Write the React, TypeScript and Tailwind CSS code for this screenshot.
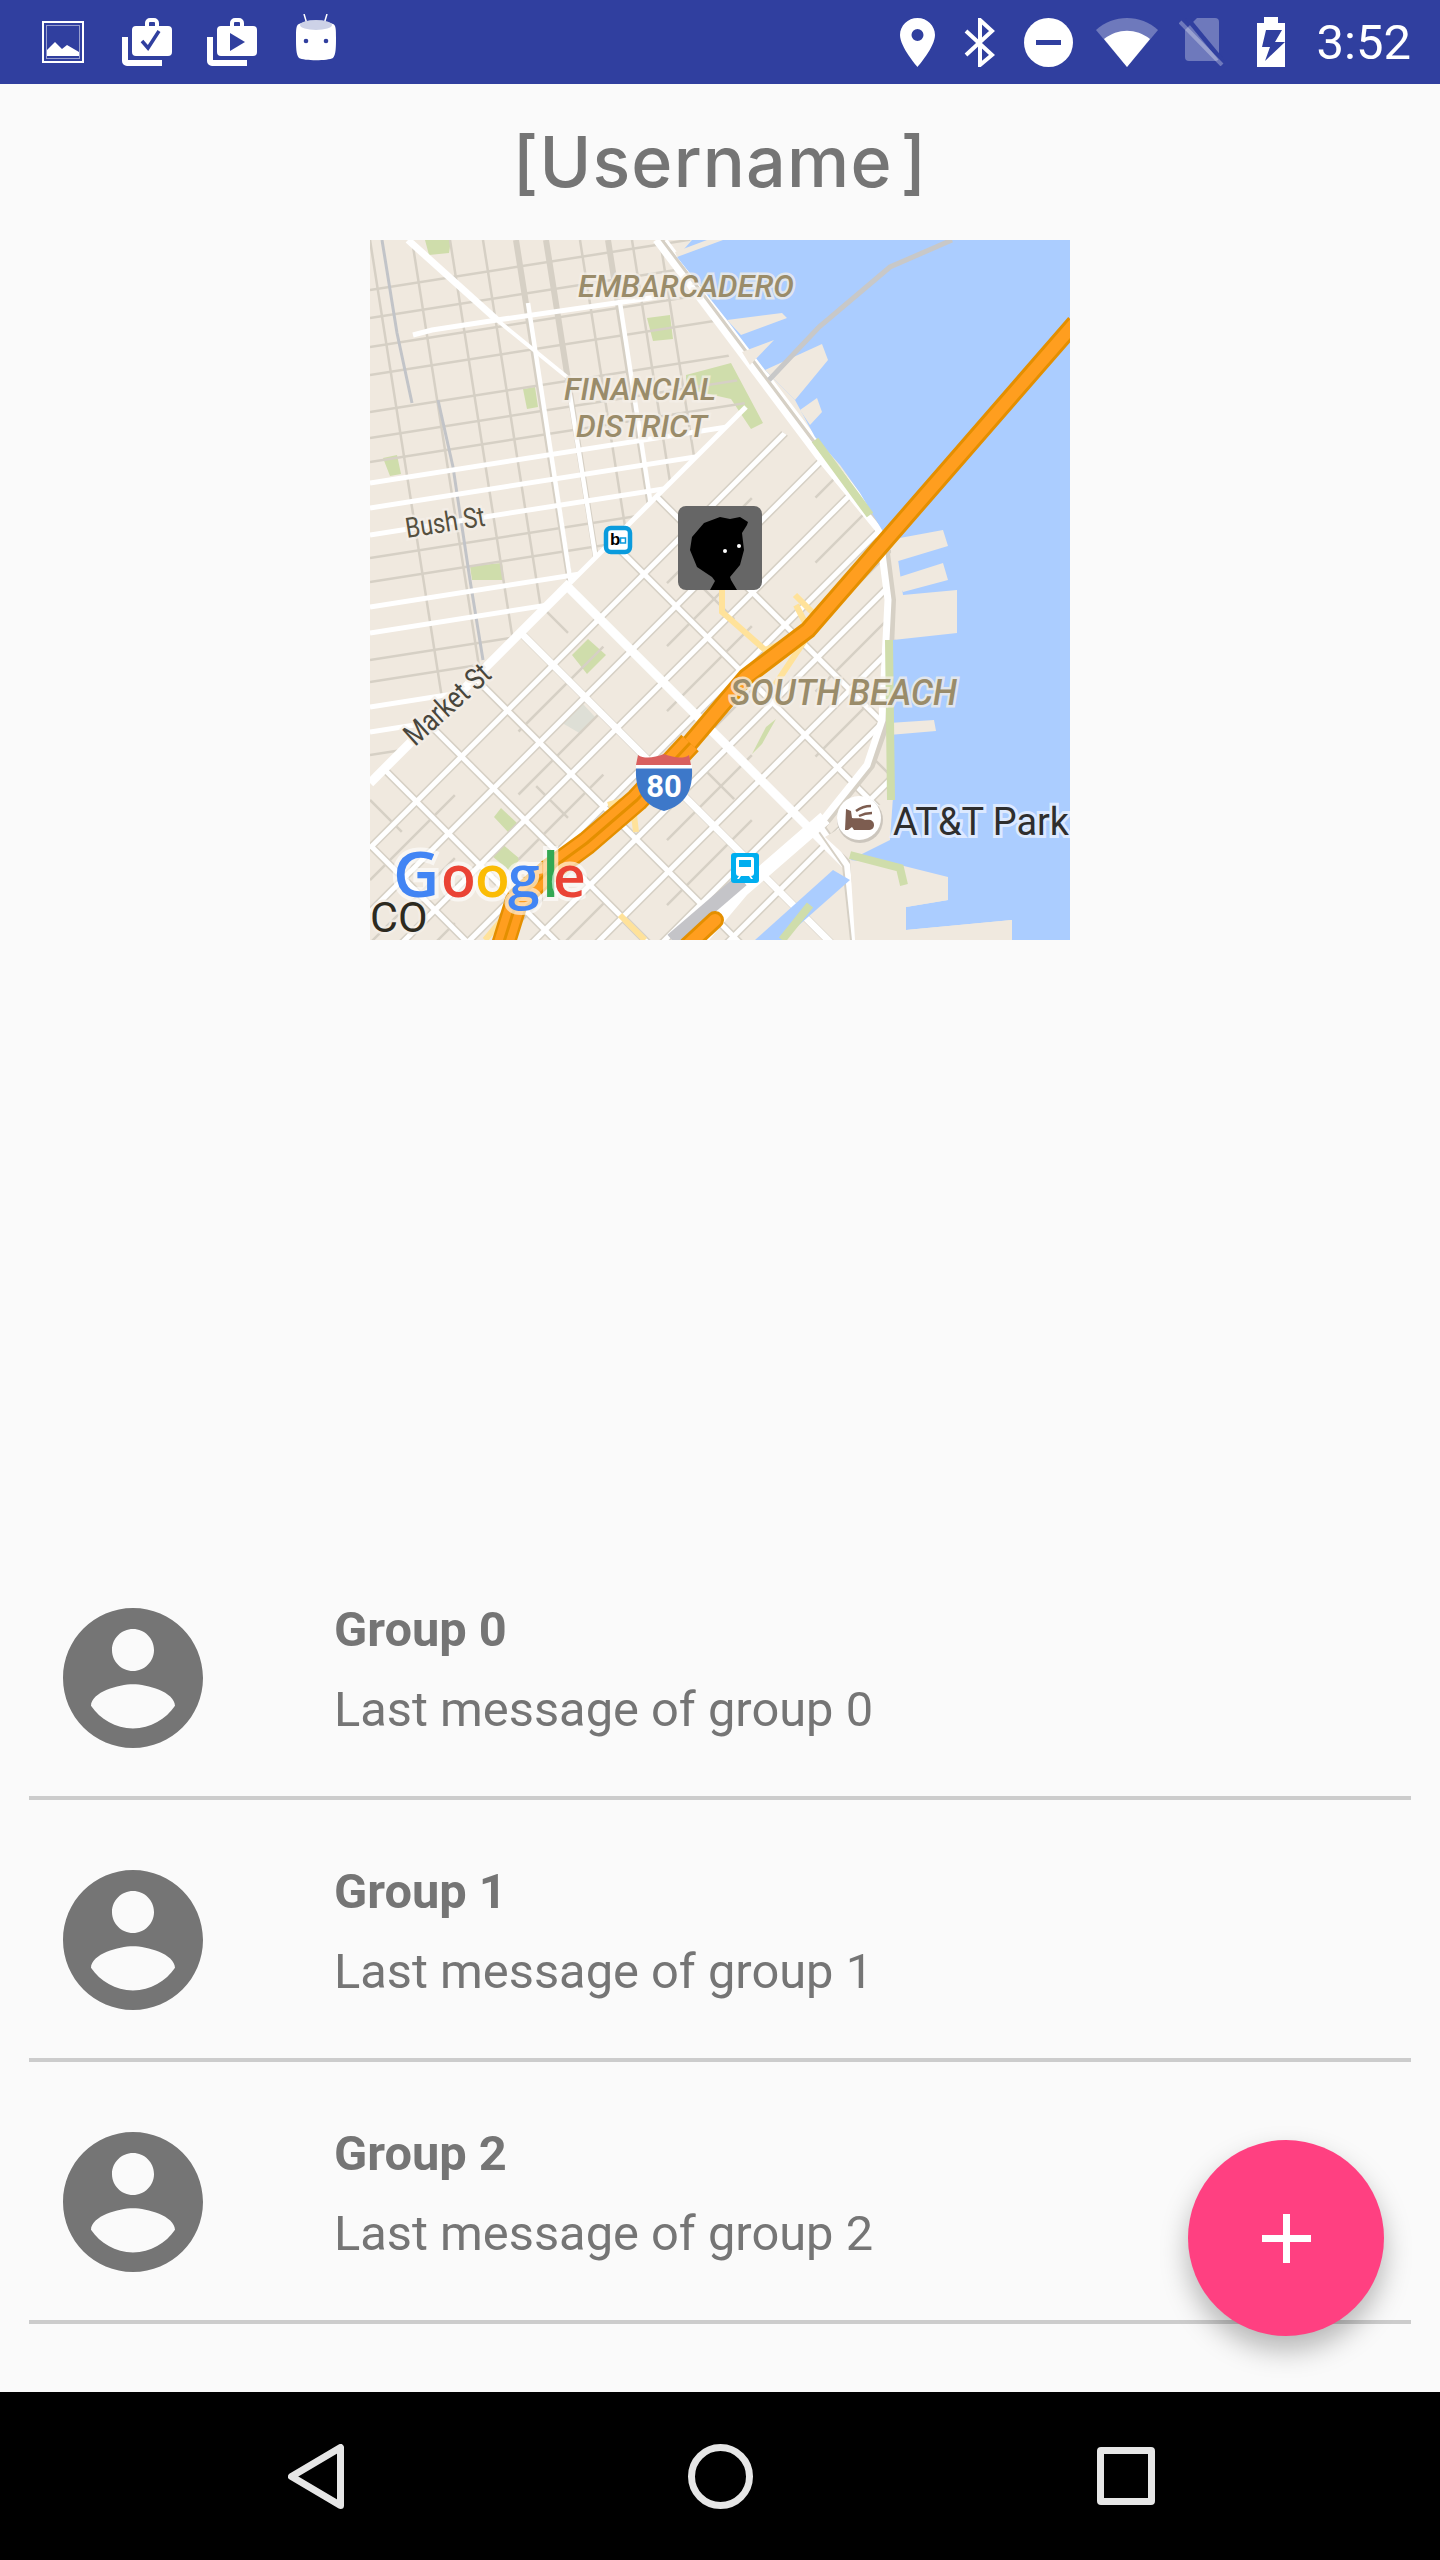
const fiMinor = [50, 78, 107, 135, 172, 198, 222, 318, 342, 420, 442, 515];
const fiMajor = [243, 268, 295, 367, 393, 467, 492];
const fiVert = [0, 42, 80, 113, 210, 262, 290];
const fiVertMajor = [146, 176, 238];
const somaA = [608, 672, 735, 800, 865, 930, 995, 1060];
const somaAlley = [640, 703, 768, 832, 897, 962];
const somaB = [-30, 60, 149, 242, 333, 425, 515, 605];
const somaBAlley = [15, 195, 380, 560];
const highway = 'M705 83L438 390 376 437 320 503 267 560 217 603 180 630 147 660 133 705';
const highwayLower = 'M320 503L267 560 217 603 180 630 147 660 133 705';

function GroupAvatar() {
  return (
    <svg viewBox="0 0 24 24" className="h-[168px] w-[168px] shrink-0 fill-[#757575]">
      <path d="M12 2C6.48 2 2 6.48 2 12s4.48 10 10 10 10-4.48 10-10S17.52 2 12 2zm0 3c1.66 0 3 1.34 3 3s-1.34 3-3 3-3-1.34-3-3 1.34-3 3-3zm0 14.2c-2.5 0-4.71-1.28-6-3.22.03-1.99 4-3.08 6-3.08 1.99 0 5.97 1.09 6 3.08-1.29 1.94-3.5 3.22-6 3.22z" />
    </svg>
  );
}

function BagIcon({ play }: { play?: boolean }) {
  return (
    <svg viewBox="0 0 50 48" className="h-[48px] w-[50px]">
      <path fill="none" stroke="#fff" strokeWidth="6" d="M3 19v24a2 2 0 0 0 2 2h35" />
      <path
        fill="#fff"
        fillRule="evenodd"
        d="M14 8h9v-3a5 5 0 0 1 5-5h4a5 5 0 0 1 5 5v3h9a4 4 0 0 1 4 4v22a4 4 0 0 1-4 4H14a4 4 0 0 1-4-4V12a4 4 0 0 1 4-4zM27 8h6V5a1 1 0 0 0-1-1h-4a1 1 0 0 0-1 1z"
      />
      {play ? (
        <path fill="#303F9F" d="M23 15l15 9-15 9z" />
      ) : (
        <path fill="none" stroke="#303F9F" strokeWidth="3.5" d="M20 23l6 7 11-17" />
      )}
    </svg>
  );
}

function StatusBar() {
  return (
    <div className="flex h-[84px] shrink-0 items-center bg-[#303F9F] pl-[42px] pr-[29px]">
      <svg viewBox="0 0 42 42" className="h-[42px] w-[42px]">
        <rect x="1" y="1" width="40" height="40" fill="none" stroke="#fff" strokeWidth="2" />
        <rect x="4.5" y="4.500" width="33" height="33" fill="none" stroke="#fff" strokeWidth="1" opacity="0.5" />
        <path fill="#fff" d="M5 35v-6l8-8 7 7 5-4 12 7v4z" />
      </svg>
      <div className="ml-[38px]">
        <BagIcon />
      </div>
      <div className="ml-[35px]">
        <BagIcon play />
      </div>
      <svg viewBox="0 0 40 48" className="mb-[8px] ml-[39px] h-[48px] w-[40px]">
        <path stroke="#fff" strokeWidth="1.5" d="M8 0l3 10M31 0l-3 10" />
        <path fill="#fff" d="M3 10c5-3 29-3 34 0 3 1 3 6 3 14 0 8 0 17-3 20-5 3-29 3-34 0-3-3-3-12-3-20 0-8 0-13 3-14z" />
        <ellipse cx="20" cy="11" rx="16" ry="5" fill="#CDD2E7" />
        <circle cx="10" cy="27" r="2.300" fill="#303F9F" />
        <circle cx="30" cy="27" r="2.300" fill="#303F9F" />
      </svg>

      <svg viewBox="0 0 35 49" className="ml-auto h-[49px] w-[35px]">
        <path
          fill="#fff"
          fillRule="evenodd"
          d="M17.5 0C7.8 0 0 7.7 0 17c0 12 17.5 32 17.5 32S35 29 35 17C35 7.7 27.2 0 17.5 0zm0 11a6 6 0 1 1 0 12 6 6 0 0 1 0-12z"
        />
      </svg>
      <svg viewBox="0 0 31 49" className="ml-[29px] h-[49px] w-[31px]">
        <path fill="none" stroke="#fff" strokeWidth="4" d="M2 13l26 24-12 10V2l12 11L2 37" />
      </svg>
      <svg viewBox="0 0 49 49" className="ml-[29px] h-[49px] w-[49px]">
        <circle cx="24.5" cy="24.5" r="24.5" fill="#fff" />
        <rect x="12" y="22" width="25" height="5" fill="#303F9F" />
      </svg>
      <svg viewBox="0 0 62 49" className="ml-[23px] h-[49px] w-[62px]">
        <path fill="#fff" opacity="0.3" d="M0 12C17-4 45-4 62 12L31 49z" />
        <path fill="#fff" d="M8 21c14-11 32-11 46 0L31 49z" />
      </svg>
      <svg viewBox="0 0 46 48" className="ml-[21px] h-[48px] w-[46px]">
        <path fill="#fff" opacity="0.3" d="M18 0h18a4 4 0 0 1 4 4v35a4 4 0 0 1-4 4H10a4 4 0 0 1-4-4V12z" />
        <path stroke="#303F9F" strokeWidth="4.500" d="M8 0l38 46" />
        <path stroke="#fff" strokeOpacity="0.3" strokeWidth="4" d="M1 4l42 43" />
      </svg>
      <svg viewBox="0 0 28 50" className="ml-[32px] h-[50px] w-[28px]">
        <path fill="#fff" d="M7 0h14v6h7v44H0V6h7z" />
        <path fill="#303F9F" d="M9 13h16l-7 12h10L8 44l5-14H5z" />
      </svg>
      <span className="ml-[32px] font-['Roboto',sans-serif] text-[49px] leading-none text-white">3:52</span>
    </div>
  );
}

function MapView() {
  return (
    <svg viewBox="0 0 700 700" className="h-[700px] w-[700px] shrink-0">
      <defs>
        <clipPath id="fidi">
          <path d="M0 0H320L376 167 0 543z" />
        </clipPath>
        <clipPath id="soma">
          <path d="M0 543L376 167 449 217 520 290 530 500 500 700H0z" />
        </clipPath>
      </defs>
      <rect width="700" height="700" fill="#F0E9DF" />

      <g fill="#CFDDAB">
        <path d="M55 0h26l-2 13-20 2zM277 78l23-3 3 24-20 2zM153 149l12-2 3 20-11 2zM13 218l14-3 4 19-11 2zM100 326l32-3 2 17H102zM316 135l45-12 32 60-12 6-20-30-45-10zM218 399l18 16-19 19-15-19zM131 568l16 15-9 9-14-15zM131 603l19 16-10 12-18-15zM396 487l10-8-14 25-10 10z" />
      </g>
      <path fill="#DEDFD6" d="M212 463l13 14-14 17-17-10-4-6z" />

      <g clipPath="url(#fidi)" fill="none">
        <g stroke="#D6D0C5" strokeWidth="2.500">
          {fiMinor.map((y) => (
            <line key={y} x1="0" y1={y} x2="420" y2={y - 66} />
          ))}
          {fiVert.map((x) => (
            <line key={x} x1={x} y1="0" x2={x + 88} y2="560" />
          ))}
          {fiVertMajor.map((x) => (
            <line key={x} x1={x} y1="0" x2={x + 88} y2="560" strokeWidth="6" />
          ))}
        </g>
        <path stroke="#C2C4C8" strokeWidth="3" d="M12 0L27 93 42 163M68 160L83 227 100 340 113 420" />
        <g stroke="#fff">
          {fiVertMajor.map((x, i) => (
            <line key={x} x1={i === 1 ? x + 22 : x + 12} y1={i === 1 ? 143 : 63} x2={x + 88} y2="560" strokeWidth="4.500" />
          ))}
          {fiMajor.map((y) => (
            <line key={y} x1="0" y1={y} x2="420" y2={y - 66} strokeWidth="5" />
          ))}
          <path strokeWidth="5" d="M43 95L62 90 127 80 287 57" />
          <path strokeWidth="7" d="M38 0L127 80" />
          <path strokeWidth="4" d="M127 80L197 137" />
        </g>
      </g>

      <g clipPath="url(#soma)" fill="none">
        <g stroke="#D6D0C5" strokeWidth="2.500">
          {somaAlley.map((c) => (
            <line key={c} x1="0" y1={c} x2={c} y2="0" strokeDasharray="120 90" />
          ))}
          {somaBAlley.map((d) => (
            <line key={d} x1="0" y1={d} x2="700" y2={d + 700} strokeDasharray="45 190" />
          ))}
          {somaA.map((c) => (
            <line key={c} x1="0" y1={c} x2={c} y2="0" strokeWidth="8" />
          ))}
          {somaB.map((d) => (
            <line key={d} x1="0" y1={d} x2="700" y2={d + 700} strokeWidth="8" />
          ))}
        </g>
        <g stroke="#fff">
          {somaA.map((c) => (
            <line key={c} x1="0" y1={c} x2={c} y2="0" strokeWidth="5" />
          ))}
          {somaB.map((d) => (
            <line key={d} x1="0" y1={d} x2="700" y2={d + 700} strokeWidth={d === 149 ? 9 : d === 242 ? 7 : 5} />
          ))}
        </g>
      </g>

      <g fill="none">
        <path stroke="#fff" strokeWidth="9" d="M0 543L200 343" />
        <path stroke="#fff" strokeWidth="5" d="M200 343L376 167" />
        <path stroke="#D6D0C5" strokeWidth="10" d="M288 0L452 217 512 290 521 360 516 480 500 525 452 585" />
        <path stroke="#fff" strokeWidth="7" d="M286 0L449 217 509 290 518 360 512 480 497 525 449 585" />
        <path stroke="#fff" strokeWidth="3" d="M296 0L458 215 518 290" />
        <path stroke="#D6D0C5" strokeWidth="10" d="M449 585L477 625 485 700" />
        <path stroke="#fff" strokeWidth="6" d="M449 585L477 625 485 700" />
        <path stroke="#fff" strokeWidth="14" d="M455 578L372 650 330 700" />
      </g>

      <path fill="#ABCDFF" d="M307 17L322 0H700V700H642V680L536 690V667L578 660V637L523 645 510 632 480 620 523 557 519 503 519 483 523 400 587 393V350L533 355 526 305 512 290 490 253 470 225 445 197 425 160 395 130 357 80z" />
      <g fill="#F0E9DF">
        <path d="M307 17L353 0H337L305 12zM357 80L412 73 417 78 371 95zM372 112L404 100 380 125zM395 130L452 104 458 120 425 160zM430 170L447 158 452 172 440 185zM519 300L573 290 578 306 525 322zM526 338L573 323 578 340 533 352zM519 483L564 480 566 491 519 495z" />
        <path d="M455 597L523 557 520 600 480 620z" />
        <path d="M480 620L530 625 578 637 578 660 536 667 536 690 642 680V700H485z" />
      </g>
      <path fill="#ABCDFF" d="M463 630L385 700H412L480 640z" />
      <path fill="none" stroke="#CFDDAB" strokeWidth="8" d="M480 615L530 628 534 645M412 700L440 665M445 200L500 275M519 400L521 560" />

      <path fill="none" stroke="#C8C8C8" strokeWidth="5" d="M582 0L520 27 449 87 399 140" />
      <path fill="none" stroke="#C4C4C8" strokeWidth="14" d="M372 640L302 700" />
      <path fill="none" stroke="#FFE29A" strokeWidth="6" d="M352 350L352 372 395 410 440 392 426 365M425 355L445 375 435 400 405 445M238 565L262 558 266 592M115 700L140 670M250 675L275 700" />

      <g fill="none" strokeLinejoin="round">
        <path stroke="#E48F00" strokeWidth="18" d={highway} />
        <path stroke="#FF9E1F" strokeWidth="12" d={highway} />
        <path stroke="#E48F00" strokeWidth="24" d={highwayLower} />
        <path stroke="#FF9E1F" strokeWidth="19" d={highwayLower} />
        <path stroke="#E48F00" strokeWidth="3" d={highwayLower} />
        <path stroke="#E48F00" strokeWidth="18" strokeLinecap="round" d="M345 680L318 705" />
        <path stroke="#FF9E1F" strokeWidth="12" strokeLinecap="round" d="M345 680L318 705" />
      </g>

      <g className="[paint-order:stroke] font-['Roboto',sans-serif] italic" fontWeight="500" fill="#9A8C6A" stroke="#F4EFE8" strokeOpacity="0.75" strokeWidth="5">
        <text x="208" y="57" fontSize="32" textLength="216" lengthAdjust="spacingAndGlyphs">EMBARCADERO</text>
        <text x="194" y="160" fontSize="32" textLength="152" lengthAdjust="spacingAndGlyphs">FINANCIAL</text>
        <text x="206" y="197" fontSize="32" textLength="131" lengthAdjust="spacingAndGlyphs">DISTRICT</text>
        <text x="360" y="465" fontSize="37" textLength="227" lengthAdjust="spacingAndGlyphs">SOUTH BEACH</text>
      </g>
      <g className="[paint-order:stroke] font-['Roboto',sans-serif]" stroke="#F4EFE8" strokeOpacity="0.8" strokeWidth="5">
        <text x="37" y="298" fontSize="28" fill="#55503F" transform="rotate(-9 37 298)" textLength="80" lengthAdjust="spacingAndGlyphs">Bush St</text>
        <text x="45" y="507" fontSize="30" fill="#48463C" transform="rotate(-42 45 507)" textLength="105" lengthAdjust="spacingAndGlyphs">Market St</text>
        <text x="0" y="692" fontSize="43" fill="#2D2A1F">CO</text>
      </g>
      <text x="523" y="595" fontSize="39" fill="#2E2E2E" stroke="#DCE9FF" strokeWidth="6" textLength="176" lengthAdjust="spacingAndGlyphs" className="[paint-order:stroke] font-['Roboto',sans-serif]">AT&amp;T Park</text>

      <text y="657" fontSize="57" fontWeight="600" stroke="#fff" strokeOpacity="0.6" strokeWidth="8" className="[paint-order:stroke] font-['Open_Sans',sans-serif]">
        <tspan x="23" fontSize="64" fill="#4285F4">G</tspan>
        <tspan x="71" fill="#EA4335">o</tspan>
        <tspan x="105" fill="#FBBC05">o</tspan>
        <tspan x="138" fill="#4285F4">g</tspan>
        <tspan x="172" fontSize="62" fill="#34A853">l</tspan>
        <tspan x="183" fill="#EA4335">e</tspan>
      </text>

      <path fill="#3D78C9" d="M266 528h56c1 22-6 37-28 43-22-6-29-21-28-43z" />
      <path fill="#D9605F" d="M268 515c6 4 16 3 26-1 10 4 20 5 25 1l2 10h-55z" />
      <rect x="266" y="525" width="56" height="3.500" fill="#fff" />
      <text x="294" y="557" fontSize="31" fontWeight="700" fill="#fff" textAnchor="middle" className="font-['Roboto',sans-serif]">80</text>

      <rect x="236" y="288" width="24" height="24" rx="5" fill="#fff" stroke="#0A9BDD" strokeWidth="4.500" />
      <text x="240" y="305" fontSize="17" fontWeight="700" fill="#000" className="font-['Liberation_Sans',sans-serif]">b</text>
      <rect x="250.500" y="298" width="5" height="5" fill="none" stroke="#0A9BDD" strokeWidth="1.500" />

      <rect x="361" y="613" width="28" height="30" rx="3" fill="#00AEEF" />
      <path fill="#fff" fillRule="evenodd" d="M368 617h14a2 2 0 0 1 2 2v14a3 3 0 0 1-3 3l2 3h-2l-2-3h-8l-2 3h-2l2-3a3 3 0 0 1-3-3v-14a2 2 0 0 1 2-2zm1 3v7h12v-7z" />

      <circle cx="490" cy="580" r="23" fill="#000" opacity="0.15" />
      <circle cx="489" cy="578" r="22" fill="#fff" />
      <path fill="#7D5D50" d="M476 569l5 2 1 7c4 1 8-1 13 2 6-1 9 1 9 5 0 3-2 5-6 5h-14l-2-3-4 3h-3z" />
      <path fill="none" stroke="#7D5D50" strokeWidth="2.500" d="M486 571c4-3 10-5 15-5M489 576c4-2 8-3 13-3" />

      <rect x="308" y="266" width="84" height="84" rx="8" fill="#666" />
      <path
        transform="translate(308 266)"
        fill="#000"
        d="M70 16L62 11 52 13 42 11 26 17 14 31 12 44 19 61 34 71 37 75 32 84H59L53 74 52 71 62 59 66 44 64 27 69 19z"
      />
      <circle cx="355" cy="311" r="2" fill="#fff" />
      <circle cx="369" cy="306" r="2" fill="#fff" />
    </svg>
  );
}

function GroupRow({ index }: { index: number }) {
  return (
    <div className="mx-[29px] flex h-[262px] border-b-4 border-[#CCCCCC] pl-[20px] pt-[56px]">
      <GroupAvatar />
      <div className="ml-[117px] mt-[-4px] font-['Roboto',sans-serif] text-[48.8px] leading-[80px] text-[#757575]">
        <div className="font-bold">Group {index}</div>
        <div>Last message of group {index}</div>
      </div>
    </div>
  );
}

export default function App() {
  return (
    <div className="flex h-[2560px] w-[1440px] flex-col overflow-hidden bg-[#FAFAFA]">
      <StatusBar />
      <main className="relative flex flex-1 flex-col items-center">
        <h1 className="flex h-[156px] items-center font-['Inter',sans-serif] text-[70px] font-medium leading-none tracking-[1.2px] text-[#757575] [word-spacing:-12px]">
          [Username ]
        </h1>
        <MapView />
        <div className="mb-[68px] mt-auto w-full">
          {[0, 1, 2].map((i) => (
            <GroupRow key={i} index={i} />
          ))}
        </div>
        <button className="absolute bottom-[56px] right-[56px] flex h-[196px] w-[196px] items-center justify-center rounded-full bg-[#FF4081] shadow-[0_14px_28px_rgba(0,0,0,0.28)]">
          <svg viewBox="0 0 49 49" className="h-[49px] w-[49px] fill-white">
            <path d="M21 0h7v21h21v7H28v21h-7V28H0v-7h21z" />
          </svg>
        </button>
      </main>
      <nav className="relative flex h-[168px] shrink-0 items-center bg-black pl-[288px]">
        <svg viewBox="0 0 56 65" className="h-[65px] w-[56px]">
          <path fill="none" stroke="#E6E6E6" strokeWidth="7" strokeLinejoin="round" d="M52.5 3.500v58L3.500 32.500z" />
        </svg>
        <svg viewBox="0 0 65 65" className="ml-[344px] h-[65px] w-[65px]">
          <circle cx="32.500" cy="32.500" r="29" fill="none" stroke="#E6E6E6" strokeWidth="7" />
        </svg>
        <div className="ml-[344px] h-[58px] w-[58px] rounded-[4px] border-[7px] border-[#E6E6E6]" />
      </nav>
    </div>
  );
}
